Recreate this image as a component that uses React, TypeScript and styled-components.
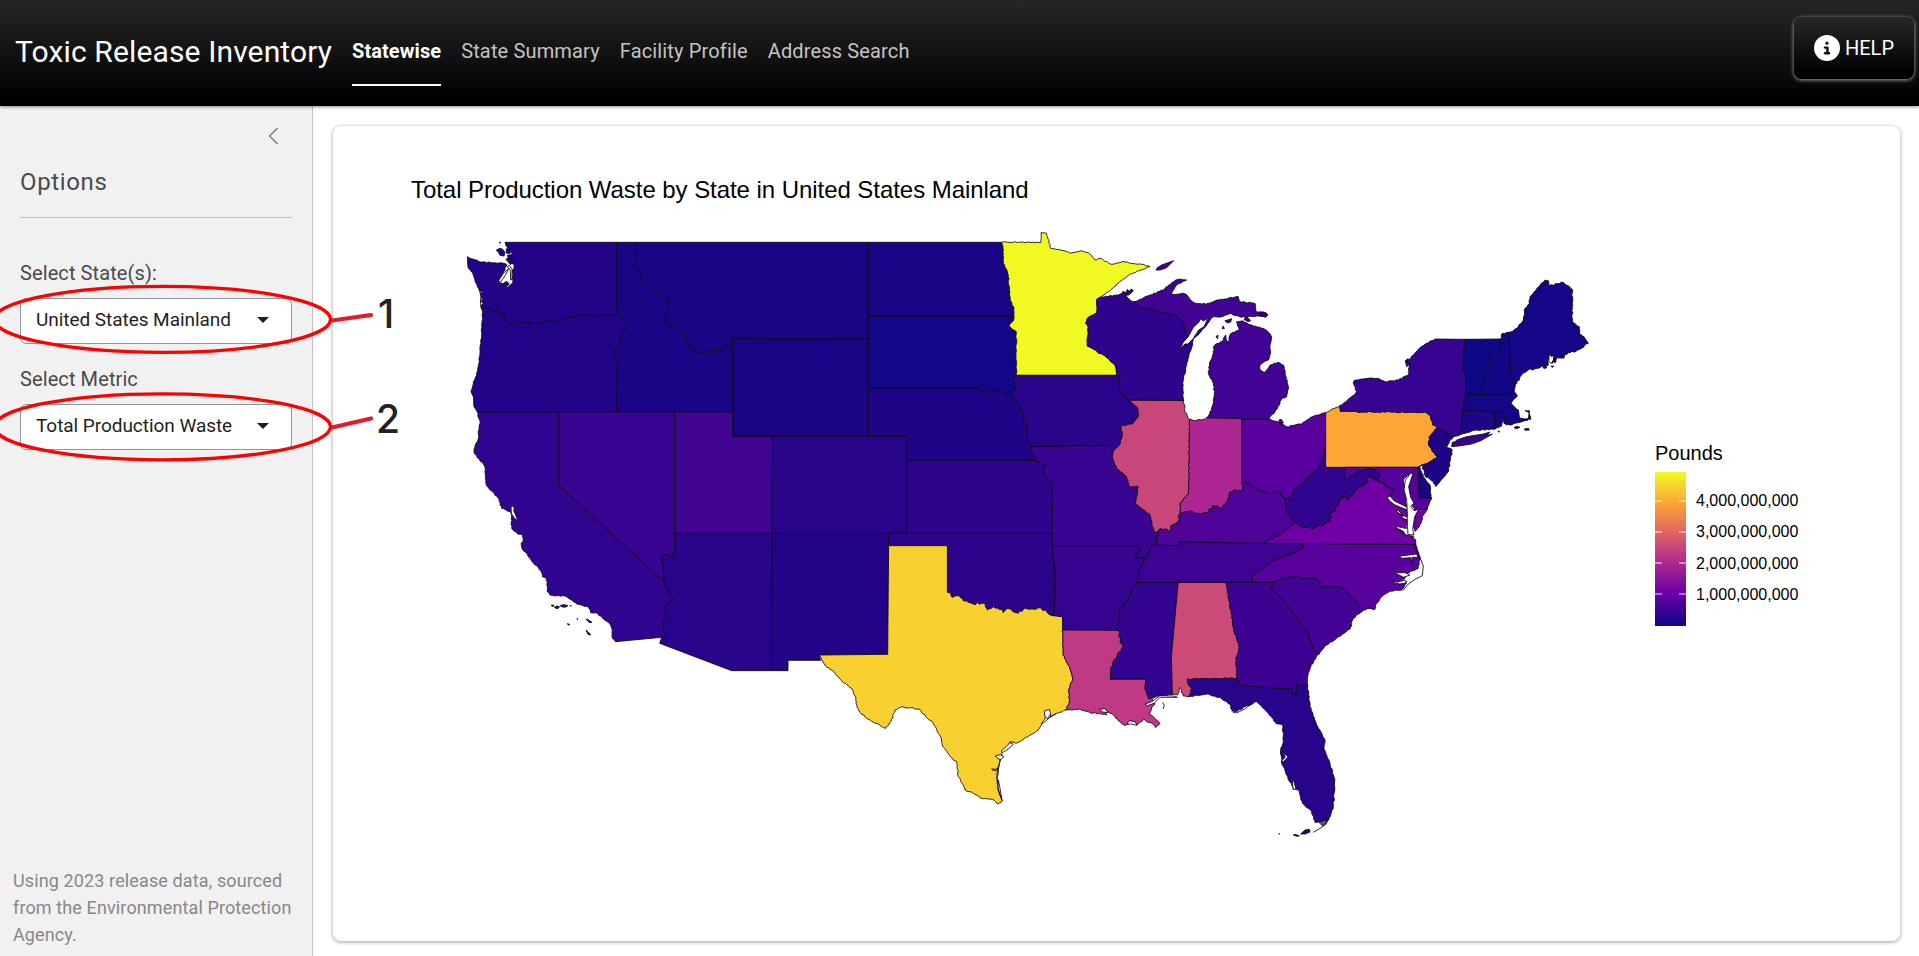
import React from 'react';
import styled, { createGlobalStyle } from 'styled-components';
import { FaCircleInfo } from 'react-icons/fa6';

const GlobalStyle = createGlobalStyle`
  *, *::before, *::after { box-sizing: border-box; }
  html, body, #root { height: 100%; }
  body {
    margin: 0;
    background: #fff;
    color: #222;
    font-family: Roboto, 'Liberation Sans', sans-serif;
    overflow: hidden;
  }
`;

const Page = styled.div`
  position: relative;
  display: flex;
  flex-direction: column;
  height: 956px;
`;

const Navbar = styled.header`
  display: flex;
  align-items: flex-start;
  flex: 0 0 106px;
  padding: 0 5px 0 15px;
  background: linear-gradient(#262626, #121212 50%, #000 95%);
  box-shadow: 0 1px 3px rgba(0, 0, 0, 0.45);
  z-index: 1;
`;

const Brand = styled.h1`
  margin: 31px 21px 0 0;
  width: 316px;
  font-size: 30px;
  font-weight: 400;
  line-height: 42px;
  letter-spacing: 0.13px;
  white-space: nowrap;
  color: #fff;
`;

const Nav = styled.nav`
  display: flex;
  gap: 20px;
  margin-top: 16px;
`;

const NavLink = styled.a<{ $active?: boolean }>`
  height: 70px;
  padding-top: 20px;
  font-size: 20px;
  line-height: 30px;
  letter-spacing: ${(p) => (p.$active ? '0.08px' : '0.15px')};
  white-space: nowrap;
  font-weight: ${(p) => (p.$active ? 700 : 400)};
  color: ${(p) => (p.$active ? '#fff' : '#c3c3c3')};
  border-bottom: 2px solid ${(p) => (p.$active ? '#fff' : 'transparent')};
`;

const HelpButton = styled.button`
  display: flex;
  align-items: center;
  justify-content: center;
  gap: 5px;
  width: 120px;
  height: 62px;
  margin: 17px 0 0 auto;
  padding: 0 0 1px;
  border: 0;
  border-radius: 8px;
  background: linear-gradient(#262626, #121212 50%, #000 95%);
  box-shadow: 0 1px 4px rgba(255, 255, 255, 0.65);
  color: #fff;
  font: 400 20px Roboto, sans-serif;
`;

const Main = styled.div`
  display: flex;
  flex: 1;
  min-height: 0;
`;

const Sidebar = styled.aside`
  display: flex;
  flex-direction: column;
  flex: 0 0 313px;
  padding: 21px 20px 0;
  background: #f1f1f1;
  border-right: 1px solid #c1c1c1;
`;

const Collapse = styled.div`
  display: flex;
  justify-content: flex-end;
  height: 18px;
  padding-right: 13px;
`;

const SidebarTitle = styled.h2`
  margin: 19px 0 0;
  height: 54px;
  padding-top: 1px;
  border-bottom: 1px solid #c1c1c1;
  font-size: 24px;
  font-weight: 400;
  line-height: 34px;
  letter-spacing: 0.65px;
  color: #4a4a4a;
`;

const Field = styled.label<{ $top: number }>`
  display: block;
  margin-top: ${(p) => p.$top}px;
  font-size: 20px;
  line-height: 30px;
  letter-spacing: 0.1px;
  color: #4a4a4a;
`;

const Select = styled.div`
  display: flex;
  align-items: center;
  justify-content: space-between;
  height: 46px;
  margin-top: 10px;
  padding: 0 22px 2px 15px;
  border: 1px solid #8d959e;
  border-radius: 6px;
  background: #fff;
  font-size: 19px;
  letter-spacing: -0.05px;
  color: #1d1f21;
`;

const Caret = styled.span`
  border: 6px solid transparent;
  border-top-color: #1d1f21;
  border-bottom: 0;
`;

const Source = styled.p`
  margin: auto -15px 8px -7px;
  font-size: 18px;
  line-height: 27px;
  letter-spacing: 0.12px;
  color: #888;
`;

const Card = styled.section`
  flex: 1;
  margin: 20px 19px 15px 20px;
  padding-top: 48px;
  border-radius: 8px;
  background: #fff;
  box-shadow: 0 1px 4px rgba(0, 0, 0, 0.4);
  font-family: 'Liberation Sans', Arial, sans-serif;
  color: #000;
`;

const ChartTitle = styled.h3`
  margin: 0 0 0 78px;
  height: 46px;
  font-size: 24px;
  font-weight: 400;
  line-height: 32px;
  letter-spacing: -0.055px;
  white-space: nowrap;
`;

const ChartBody = styled.div`
  display: flex;
  gap: 55px;
  padding-left: 117px;
`;

const Legend = styled.div`
  padding-top: 221px;
`;

const LegendTitle = styled.div`
  height: 31px;
  font-size: 20px;
  line-height: 24px;
`;

const Scale = styled.div`
  display: flex;
  gap: 10px;
`;

const Ramp = styled.div`
  display: flex;
  flex-direction: column;
  gap: 29.3px;
  width: 31px;
  height: 154px;
  padding-top: 27.5px;
  background: linear-gradient(#f0f921, #f8d030 10%, #fca636 20%, #e16462 39%, #b12a90 58%, #6a00a8 79%, #0d0887);
`;

const Tick = styled.span`
  height: 2px;
  border: solid rgba(255, 255, 255, 0.45);
  border-width: 0 7px;
`;

const Values = styled.div`
  display: flex;
  flex-direction: column;
  padding-top: 13px;
  font-size: 16px;
  line-height: 31.3px;
`;

const Annotations = styled.svg`
  position: absolute;
  left: 0;
  top: 270px;
  z-index: 2;
`;

const Callout = styled.span<{ $x: number; $y: number }>`
  position: absolute;
  left: ${(p) => p.$x}px;
  top: ${(p) => p.$y}px;
  z-index: 2;
  font: 500 39px/40px Inter, 'Open Sans', sans-serif;
  color: #222;
`;

type Pt = [number, number];

/* Map sheets: each border is digitised on a sheet and shifted by the sheet's origin. */
const SHEET: Record<string, Pt> = {
  A: [0, 0],
  B: [900, 0],
  C: [1800, 0],
  D: [2520, 120],
  E: [990, 1020],
  F: [1830, 1020],
};

const read = (src: string): Pt[] => {
  let origin: Pt = [0, 0];
  const out: Pt[] = [];
  src.split(/\s+/).forEach((tok) => {
    if (SHEET[tok]) {
      origin = SHEET[tok];
      return;
    }
    const [x, y] = tok.split(',').map(Number);
    out.push([x + origin[0], y + origin[1]]);
  });
  return out;
};

/* Adds small deterministic wiggles so rivers and shores look natural. */
const roughen = (pts: Pt[], amp: number): Pt[] => {
  const out: Pt[] = [pts[0]];
  for (let i = 1; i < pts.length; i++) {
    const [x0, y0] = pts[i - 1];
    const [x1, y1] = pts[i];
    const len = Math.hypot(x1 - x0, y1 - y0);
    const n = Math.max(1, Math.round(len / 6));
    for (let k = 1; k < n; k++) {
      const s = Math.sin((x0 + k * 7.13) * 12.9898 + (y0 + k * 3.7) * 78.233) * 43758.5453;
      const d = (s - Math.floor(s) - 0.5) * 2 * amp;
      out.push([
        +(x0 + ((x1 - x0) * k) / n - ((y1 - y0) / len) * d).toFixed(1),
        +(y0 + ((y1 - y0) * k) / n + ((x1 - x0) / len) * d).toFixed(1),
      ]);
    }
    out.push([x1, y1]);
  }
  return out;
};

const STRAIGHT: Record<string, string> = {
  wa_n: 'A 165,67 500,67',
  wa_id: 'A 500,67 500,258 507,286',
  id_n: 'A 500,67 557,67',
  mt_n: 'A 557,67 1255,67',
  or_ca: 'A 82,576 326,576',
  or_nv: 'A 326,576 500,576',
  id_nv: 'A 500,576 674,576',
  id_ut: 'A 674,576 848,576',
  id_wy: 'A 848,395 848,576',
  mt_wy: 'A 848,395 848,356 1255,357',
  ut_wy: 'A 848,576 848,649 965,649',
  ca_mx: 'A 497,1265 635,1252',
  ca_nv: 'A 326,576 326,795 640,1083',
  nv_ut: 'A 674,576 674,940',
  ut_az: 'A 674,940 966,940',
  az_mx: 'A 635,1252 629,1270 845,1352 965,1352',
  az_nm: 'A 966,940 965,1352',
  ut_co: 'A 965,649 966,940',
  wy_co: 'A 965,649 1255,649',
  co_nm: 'A 966,940 1316,940',
  co_ok: 'A 1316,940 1372,940',
  co_ks: 'A 1372,940 1372,721',
  co_ne: 'A 1372,721 1372,649 1255,649',
  wy_ne: 'A 1255,649 1255,504',
  wy_sd: 'A 1255,504 1255,357',
  mt_sd: 'A 1255,357 1255,289',
  mt_nd: 'A 1255,289 1255,67',
  nd_n: 'A 1255,67 1654,67',
  nd_sd: 'A 1255,289 1692,289',
  ks_ne: 'B 472,721 860,721',
  ks_ok: 'B 472,940 906,940',
  ok_mo: 'B 906,940 906,977',
  ok_ar: 'B 906,977 915,1045 913,1187',
  nm_ok: 'B 416,940 416,977',
  nm_tx: 'B 416,977 413,1303 207,1305',
  nm_mx: 'B 65,1352 114,1352 114,1321 212,1321 207,1305',
  tx_ar: 'B 913,1187 938,1190 938,1230',
  mn_ia: 'C -102,466 201,466',
  ia_mo: 'C -58,680 175,677 190,692',
  mo_ar: 'C 6,977 262,977 270,990 253,1013 290,1015',
  ar_la: 'F 8,210 175,211',
  tn_ms: 'F 232,67 355,67',
  tn_al: 'F 355,67 498,67',
  tn_ga: 'F 498,67 575,67',
  ga_nc: 'F 575,67 642,67',
  ms_al: 'F 355,67 352,95 334,290 337,403',
  ga_fl: 'F 530,355 542,377 697,388 698,403 708,403 710,372 722,376 743,380',
  tn_va: 'C 640,970 758,970',
  tn_ky: 'C 318,975 387,977 387,965 640,970',
  in_oh: 'C 575,597 575,787',
  il_wi: 'C 235,540 401,541',
  mi_in: 'C 470,593 575,595 575,597',
  mi_oh: 'C 575,597 657,597',
  oh_pa: 'D 107,458 107,557',
  pa_wv: 'D 107,557 107,622 166,622',
  pa_md: 'D 166,622 383,622',
  md_de: 'D 383,622 387,713 425,715',
  ny_nj: 'D 442,503 490,530',
  ny_n: 'D 435,237 524,238',
  vt_n: 'D 524,238 632,237',
  vt_ma: 'D 528,403 573,404',
  ny_ma: 'D 528,403 518,452',
  ny_ct: 'D 518,452 513,515 498,528',
  ma_ct: 'D 518,452 613,455',
  ct_ri: 'D 613,455 615,507',
  nh_me: 'D 657,217 662,340 675,380',
  de_pa: 'D 410,612 397,614 383,622',
};

const ROUGH: Record<string, string> = {
  wa_coast:
    'A 95,267 92,240 90,215 85,205 75,180 68,158 55,145 52,110 92,126 160,130 170,133 165,150 148,175 147,188 165,195 172,203 188,188 188,150 193,138 180,120 186,100 172,82 165,67',
  wa_or: 'A 95,267 118,265 128,270 145,273 160,283 167,305 195,318 220,307 262,312 290,303 310,305 345,293 388,286 507,286',
  id_or: 'A 507,286 520,298 533,312 515,350 510,370 490,400 492,410 507,417 501,445 500,576',
  or_coast: 'A 95,267 97,290 95,345 90,380 88,425 80,465 70,485 63,515 70,530 72,560 82,576',
  id_mt:
    'A 557,67 557,142 575,160 575,180 600,195 630,228 645,238 656,238 652,265 645,300 645,312 657,325 680,307 690,320 697,335 710,355 710,370 728,375 735,395 745,402 750,395 775,397 775,392 820,390 828,377 848,395',
  ca_coast:
    'A 82,576 90,610 85,640 85,655 72,688 75,703 100,732 106,750 106,775 112,800 147,838 155,865 183,878 185,925 203,942 218,945 220,960 213,970 218,990 233,1005 250,1028 275,1055 277,1070 290,1075 292,1115 300,1125 350,1130 370,1145 380,1152 415,1160 422,1178 440,1178 480,1213 487,1230 487,1255 497,1265',
  ca_az: 'A 640,1083 652,1105 660,1130 669,1138 650,1155 645,1195 637,1210 640,1230 650,1240 635,1252',
  az_nv: 'A 640,1083 643,1075 635,1008 655,1003 667,1012 675,995 674,940',
  nd_mn: 'B 754,67 760,90 760,130 775,165 780,240 792,265 792,289',
  sd_mn: 'B 792,289 790,303 777,315 785,325 799,335 799,466',
  sd_ia: 'B 799,466 792,470 793,485 799,495 795,510 788,527',
  ne_ia: 'B 788,527 800,543 818,578 822,605 830,615 832,655 842,680',
  ne_mo: 'B 842,680 845,695 860,721',
  ks_mo: 'B 860,721 878,735 890,735 877,752 890,772 898,782 906,785 906,940',
  tx_la: 'E 848,210 849,285 862,310 872,330 878,355 868,385 868,430 858,450',
  tx_coast:
    'E 858,450 825,462 812,472 808,452 795,455 795,478 785,492 775,510 740,532 708,550 690,545 688,562 668,572 665,590 650,590 660,602 655,625 652,650 657,690 667,722 655,732 638,718 605,715 580,700 555,690 535,650 530,605 520,600 487,555 485,540 460,490 430,462 417,447 375,443 367,440 345,450 333,485 317,505 265,478 238,455 228,430 228,415 215,385 190,368 155,330 140,322 128,303 117,285',
  mn_n: 'B 754,67 873,67 873,38 890,40 902,85 C 45,93 60,100 90,93 115,98 135,120 150,115 185,133 222,125 245,130 275,133 300,140',
  mn_lake: 'C 300,140 240,162 205,190 180,212 150,232',
  mn_wi: 'C 150,232 140,238 140,280 115,292 107,310 115,322 112,378 160,405 195,435 201,466',
  ia_wi: 'C 201,466 210,485 207,510 235,540',
  ia_il: 'C 235,540 262,562 265,590 245,612 212,618 217,650 208,675 190,692',
  mo_il: 'C 190,692 187,712 200,745 230,770 238,800 265,800 255,850 300,885 308,920 313,937',
  mo_ky: 'C 313,937 325,937 318,975',
  mo_tn: 'C 318,975 305,975 290,1015',
  la_coast:
    'F 267,417 278,418 285,430 275,445 268,462 290,480 300,490 287,503 275,490 250,478 232,495 215,487 195,497 175,482 160,465 135,450 140,465 118,460 95,460 60,447 18,450',
  ms_coast: 'F 267,417 300,408 337,403',
  tn_nc: 'C 605,1087 610,1065 640,1045 665,1025 700,1010 740,995 758,985 758,970',
  al_ga: 'F 498,67 523,215 538,262 528,295 530,355',
  al_fl: 'F 530,355 383,357 385,372 395,385 388,410',
  al_coast: 'F 337,403 353,405 360,382 370,408 388,410',
  ga_sc: 'F 642,67 632,85 660,110 690,145 722,190 740,212 762,270 773,285',
  nc_sc: 'F 642,67 665,55 690,50 765,55 780,65 782,80 845,80 910,150',
  sc_coast: 'F 910,150 880,175 870,207 830,235 800,255 773,285',
  ga_coast: 'F 773,285 752,320 743,350 743,380',
  fl_coast:
    'F 743,380 750,440 770,495 795,540 793,570 810,610 825,660 820,740 805,780 765,787 755,755 727,730 715,690 700,688 665,610 662,565 670,545 668,495 650,492 625,460 590,425 555,440 530,455 515,450 512,435 480,412 440,402 388,410',
  nc_coast:
    'D 377,853 390,890 385,925 350,940 345,955 325,968 350,965 335,990 300,993 275,1010 260,1030 255,1048 240,1045 220,1050',
  ky_va: 'C 640,970 690,945 737,907',
  ky_wv: 'C 737,907 710,875 705,838',
  il_in: 'C 418,597 416,770 415,820 390,850 390,877',
  il_lake: 'C 401,541 405,575 418,597',
  in_lake: 'C 418,597 432,602 455,600 470,593',
  wi_n: 'C 150,232 205,225 225,217 230,230 240,240 255,245',
  wi_mi: 'C 255,245 270,262 340,277 385,290 400,310 405,330 412,350',
  wi_lake: 'C 412,350 430,355 428,375 418,400 408,440 398,490 401,541',
  mi_up:
    'C 255,245 300,225 340,210 365,188 385,178 410,180 380,195 363,225 400,220 415,230 430,247 468,253 500,240 565,230 570,245 615,250 618,275 650,280 648,290 620,288 575,292 540,280 515,290 490,290 470,315 450,338 430,355 412,350',
  mi_low:
    'C 470,593 485,570 493,520 490,490 475,460 480,425 490,400 492,378 520,360 527,345 533,372 541,342 568,328 560,305 580,303 610,318 640,325 660,342 665,355 660,375 662,400 655,420 630,435 630,450 645,457 660,435 685,427 700,435 708,470 715,500 710,530 695,535 690,550 675,575 657,597',
  oh_lake: 'C 657,597 685,605 710,620 755,612 780,593 827,578',
  oh_wv: 'D 107,557 98,590 85,625 55,650 30,675 18,682 0,715 -15,718',
  pa_lake: 'D 107,458 150,437',
  ny_pa: 'D 150,437 152,455 408,457 422,470 428,495 442,503',
  pa_nj: 'D 442,503 420,528 415,550 425,570 442,590 425,602 410,612',
  md_ves: 'D 375,757 385,750 412,747',
  md_sea: 'D 412,747 425,715',
  va_shore: 'D 412,747 400,765 388,800 375,814 370,800 375,775 375,757',
  de_coast: 'D 410,612 388,620 400,650 420,675 425,715',
  nj_coast: 'D 410,612 397,620 405,648 430,665 437,680 475,635 487,570 470,560 490,530',
  ny_lakes:
    'D 150,437 195,403 200,395 190,370 192,362 215,357 265,355 285,365 325,360 355,345 358,318 348,305 375,280 385,268 410,250 435,237',
  ny_vt: 'D 524,238 522,270 520,330 527,345 528,403',
  ny_harbor: 'D 498,528 490,530',
  vt_nh: 'D 632,237 628,278 600,290 595,320 582,340 580,370 573,404',
  nh_ma: 'D 573,404 640,405 672,393',
  nh_n: 'D 632,237 637,220 657,217',
  nh_coast: 'D 675,380 672,393',
  me_n: 'D 657,217 665,215 680,205 700,180 705,145 718,130 720,110 765,60 775,62 778,77 820,67 847,88 847,187 868,200 868,222 882,230 895,250',
  ma_coast: 'D 672,393 682,408 662,430 685,450 690,475 715,476 718,460 705,452 718,452 722,478 690,487 660,495',
  ma_ri: 'D 613,455 640,457 645,480 660,495',
  ri_coast: 'D 660,495 645,492 640,475 635,498 615,507',
  ct_coast: 'D 615,507 560,510 530,518 498,528',
};

/* Meandering rivers and ragged shores get a stronger wiggle. */
const RAGGED: Record<string, string> = {
  ar_tn: 'C 290,1015 270,1045 262,1087',
  ar_ms: 'C 262,1087 243,1110 230,1145 210,1165 205,1195 205,1231',
  la_ms: 'F 175,211 188,262 170,290 155,320 150,357',
  ky_oh: 'C 705,838 690,815 658,823 610,803 595,785 575,787',
  ky_in: 'C 575,787 577,808 540,815 537,835 512,865 488,857 470,878 440,880 425,873 390,877',
  ky_il: 'C 390,877 385,903 365,915 362,935 330,925 313,937',
  md_wv: 'D 166,622 167,660 195,640 215,632 235,625 250,628 268,640 265,663',
  wv_va: 'D 265,663 235,645 230,665 200,690 185,705 175,718 158,708 140,740 120,765 120,785 75,803 40,803 17,787',
  md_va: 'D 265,663 285,675 308,690 312,688 295,715 320,730 352,748',
  md_bay: 'D 352,748 348,700 340,660 368,637 352,675 358,710 368,740 375,757',
  va_coast: 'D 352,748 350,770 318,752 352,785 350,805 318,803 350,825 370,828 377,853',
  me_coast: 'D 895,250 870,268 835,278 822,295 800,292 787,310 780,285 775,315 755,318 715,330 690,350 675,380',
};

const ARCS: Record<string, Pt[]> = {};
Object.entries(STRAIGHT).forEach(([k, v]) => (ARCS[k] = read(v)));
Object.entries(ROUGH).forEach(([k, v]) => (ARCS[k] = roughen(read(v), 1.8)));
Object.entries(RAGGED).forEach(([k, v]) => (ARCS[k] = roughen(read(v), 4)));
ARCS.la_ms.push(...read('F 257,357 255,385 267,417'));
ARCS.nc_va = [[2558, 970], [2700, 972], [2897, 973]];
ARCS.sd_ne = [[1255, 504], ...roughen(read('B 680,504 708,520 718,514 750,514 770,520 788,527'), 1.5)];
ARCS.tx_ok = [
  [1316, 977],
  [1492, 977],
  ...roughen(
    read('B 592,1117 608,1132 630,1130 640,1143 665,1150 700,1150 712,1170 730,1160 755,1168 760,1178 770,1165 805,1180 820,1168 870,1163 890,1175 913,1187'),
    4,
  ),
];

/* Joins arcs end to end, flipping any arc that is stored the other way round. */
const ring = (names: string): string => {
  const list = names.split(' ').map((n) => ARCS[n]);
  const dist = (a: Pt, b: Pt) => Math.hypot(a[0] - b[0], a[1] - b[1]);
  const first = list[0];
  const next = list[1];
  const tail = first[first.length - 1];
  const head = first[0];
  const near = (p: Pt) => Math.min(dist(p, next[0]), dist(p, next[next.length - 1]));
  let path = near(tail) <= near(head) ? [...first] : [...first].reverse();
  list.slice(1).forEach((arc) => {
    const end = path[path.length - 1];
    path = path.concat(dist(end, arc[0]) <= dist(end, arc[arc.length - 1]) ? arc : [...arc].reverse());
  });
  return path.map((p) => p.join(',')).join(' ');
};

const STATES: [string, string, string][] = [
  ['Washington', '#230488', 'wa_coast wa_n wa_id wa_or'],
  ['Oregon', '#210488', 'wa_or id_or or_nv or_ca or_coast'],
  ['Idaho', '#1b0587', 'id_n id_mt id_wy id_ut id_nv id_or wa_id'],
  ['Montana', '#1b0587', 'mt_n mt_nd mt_sd mt_wy id_mt'],
  ['Wyoming', '#1b0587', 'mt_wy wy_sd wy_ne wy_co ut_wy id_wy'],
  ['California', '#30048e', 'or_ca ca_nv ca_az ca_mx ca_coast'],
  ['Nevada', '#390491', 'or_nv id_nv nv_ut az_nv ca_nv'],
  ['Utah', '#400392', 'id_ut ut_wy ut_co ut_az nv_ut'],
  ['Arizona', '#28048a', 'ut_az az_nm az_mx ca_az az_nv'],
  ['New Mexico', '#230488', 'co_nm nm_ok nm_tx nm_mx az_nm'],
  ['Colorado', '#28048a', 'wy_co co_ne co_ks co_ok co_nm ut_co'],
  ['North Dakota', '#1b0587', 'nd_n nd_mn nd_sd mt_nd'],
  ['South Dakota', '#110787', 'nd_sd sd_mn sd_ia sd_ne wy_sd mt_sd'],
  ['Nebraska', '#200488', 'sd_ne ne_ia ne_mo ks_ne co_ne wy_ne'],
  ['Kansas', '#2e048d', 'ks_ne ks_mo ks_ok co_ks'],
  ['Oklahoma', '#2b048b', 'co_ok ks_ok ok_mo ok_ar tx_ok nm_ok'],
  ['Texas', '#f8d030', 'tx_ok tx_ar tx_la tx_coast nm_tx'],
  ['Minnesota', '#f0f921', 'mn_n mn_lake mn_wi mn_ia sd_mn nd_mn'],
  ['Iowa', '#2a048b', 'mn_ia ia_wi ia_il ia_mo ne_ia sd_ia'],
  ['Missouri', '#390491', 'ia_mo mo_il mo_ky mo_tn mo_ar ok_mo ks_mo ne_mo'],
  ['Arkansas', '#350490', 'mo_ar ar_tn ar_ms ar_la tx_ar ok_ar'],
  ['Louisiana', '#bf3984', 'ar_la la_ms la_coast tx_la'],
  ['Mississippi', '#330490', 'tn_ms ms_al ms_coast la_ms ar_ms'],
  ['Alabama', '#cc4a78', 'tn_al al_ga al_fl al_coast ms_al'],
  ['Georgia', '#3c0392', 'tn_ga ga_nc ga_sc ga_coast ga_fl al_ga'],
  ['Florida', '#28048a', 'ga_fl fl_coast al_fl'],
  ['South Carolina', '#420394', 'nc_sc sc_coast ga_sc'],
  ['North Carolina', '#59019d', 'nc_va nc_coast nc_sc ga_nc tn_nc'],
  ['Tennessee', '#3e0393', 'tn_ky tn_va tn_nc tn_ga tn_al tn_ms ar_tn mo_tn'],
  ['Kentucky', '#4d0298', 'ky_il ky_in ky_oh ky_wv ky_va tn_ky mo_ky'],
  ['Virginia', '#6f00a5', 'wv_va md_va va_coast nc_va tn_va ky_va'],
  ['West Virginia', '#30048e', 'pa_wv md_wv wv_va ky_wv oh_wv'],
  ['Ohio', '#59019f', 'mi_oh oh_lake oh_pa oh_wv ky_oh in_oh'],
  ['Indiana', '#ad2691', 'in_lake mi_in in_oh ky_in il_in'],
  ['Illinois', '#c9467a', 'il_wi il_lake il_in ky_il mo_il ia_il'],
  ['Wisconsin', '#2e048d', 'wi_n wi_mi wi_lake il_wi ia_wi mn_wi'],
  ['Upper Michigan', '#410394', 'mi_up wi_mi'],
  ['Michigan', '#410394', 'mi_low mi_oh mi_in'],
  ['Pennsylvania', '#fca636', 'pa_lake ny_pa pa_nj de_pa pa_md pa_wv oh_pa'],
  ['New York', '#360490', 'ny_lakes ny_n ny_vt ny_ma ny_ct ny_harbor ny_nj ny_pa'],
  ['Vermont', '#0d0887', 'vt_n vt_nh vt_ma ny_vt'],
  ['New Hampshire', '#100787', 'nh_n nh_me nh_coast nh_ma vt_nh'],
  ['Maine', '#150687', 'me_n me_coast nh_me'],
  ['Massachusetts', '#130787', 'nh_ma ma_coast ma_ri ma_ct ny_ma vt_ma'],
  ['Connecticut', '#1c0587', 'ma_ct ct_ri ct_coast ny_ct'],
  ['Rhode Island', '#130787', 'ma_ri ri_coast ct_ri'],
  ['New Jersey', '#200488', 'ny_nj nj_coast pa_nj'],
  ['Delaware', '#190587', 'de_pa md_de de_coast'],
  ['Maryland', '#55019c', 'pa_md md_de md_sea md_ves md_bay md_va md_wv'],
  ['Virginia shore', '#6f00a5', 'va_shore md_ves'],
];

/* Bays and inlets cut out of the coast. */
const INLETS = [
  'C 390,388 400,366 415,350 430,322 447,306 452,296 460,303 474,294 462,320 446,330 430,355 414,372 405,372',
  'A 183,862 188,858 193,864 191,872 205,904 192,893 184,880',
  'A 178,136 186,148 186,178 182,180 181,150 172,140',
  'A 146,182 160,160 176,146 166,166 152,186',
  'A 88,212 102,215 94,219',
  'A 92,235 100,234 94,243 100,252 94,256 92,250',
  'D 325,880 332,888 380,882 384,892 366,892 368,910 362,893 334,895',
  'D 307,928 322,938 345,938 360,945 340,952 322,942',
  'D 307,960 320,967 345,960 350,968 330,972 316,970',
  'D 292,712 300,708 312,722 352,742 352,750 315,735 298,722',
  'D 362,640 369,640 356,680 362,712 372,730 362,738 372,752 386,748 374,770 368,808 372,824 354,824 352,790 352,760 350,720 342,690 346,660',
  'D 778,282 785,290 792,285 790,300 784,310 776,304',
  'F 668,575 684,590 670,606 666,602 676,590',
  'F 700,655 703,670 708,686 700,688 697,670',
  'F 118,448 135,446 145,458 128,456',
  'F 255,432 275,425 300,407 340,408 352,412 300,412 282,430 262,437',
  'F 200,492 208,482 226,485 230,496 214,492',
  'E 793,453 808,448 812,460 803,476 795,470',
  'E 663,574 678,560 690,548 700,553 684,568 668,577',
  'E 645,588 660,584 672,590 660,600',
  'E 655,660 660,685 664,712 660,705 654,682',
];

const ISLANDS: [string, string][] = [
  ['#410394', 'C 318,150 322,143 335,135 371,122 350,143 330,150'],
  ['#410394', 'C 516,325 520,318 523,326'],
  ['#410394', 'C 525,302 533,300 545,296 542,306 532,309'],
  ['#410394', 'C 498,350 504,345 503,356'],
  ['#410394', 'C 582,298 590,290 602,302 594,305'],
  ['#410394', 'C 630,284 640,276 654,285 645,292'],
  ['#410394', 'C 687,600 694,598 700,608 691,615'],
  ['#2e048d', 'C 218,214 228,218 232,208 238,215 244,207 250,212 240,222 234,226 226,222'],
  ['#360490', 'D 487,547 495,545 500,540 530,530 580,522 600,516 590,526 607,522 575,541 545,552 505,558 485,560'],
  ['#360490', 'D 346,302 354,296 352,306 362,310 350,320'],
  ['#130787', 'D 672,503 680,499 690,502 680,506'],
  ['#130787', 'D 703,507 715,505 718,510 706,511'],
  ['#130787', 'D 624,514 628,513 627,517'],
  ['#150687', 'D 810,286 818,283 822,292 813,295'],
  ['#150687', 'D 792,298 797,296 798,306 792,308'],
  ['#150687', 'D 758,320 766,318 770,324 761,325'],
  ['#150687', 'D 783,318 792,319 786,322'],
  ['#30048e', 'A 303,1156 312,1155 309,1160'],
  ['#30048e', 'A 313,1162 320,1158 329,1160 322,1167'],
  ['#30048e', 'A 331,1156 343,1154 354,1157 345,1162 334,1160'],
  ['#30048e', 'A 360,1157 364,1157 362,1159'],
  ['#30048e', 'A 382,1195 383,1198 381,1198'],
  ['#30048e', 'A 352,1211 359,1213 356,1216'],
  ['#30048e', 'A 408,1197 416,1200 426,1207 418,1208'],
  ['#30048e', 'A 408,1230 415,1236 422,1245 414,1243'],
  ['#230488', 'A 139,90 150,85 158,88 165,97 162,108 150,106 146,98'],
  ['#230488', 'A 148,66 152,67 150,70'],
  ['#230488', 'A 168,88 178,83 185,90 180,100 170,100'],
  ['#230488', 'A 168,118 175,112 190,122 182,134'],
  ['#230488', 'A 172,106 182,104 184,114 176,114'],
  ['#230488', 'A 160,190 170,184 178,192 168,202'],
  ['#28048a', 'F 722,822 735,810 748,808 750,816 735,822'],
  ['#28048a', 'F 700,825 706,823 718,828 710,829'],
  ['#28048a', 'F 656,821 659,821 658,823'],
  ['#555a60', 'F 776,786 790,782 802,780 796,792 788,798'],
];

const LINES = [
  'D 373,853 388,888 400,918 397,947 375,958 355,972 338,992',
  'E 634,626 645,628 655,625 648,632 636,630',
  'F 308,427 313,436 309,447',
  'F 815,757 808,775 798,792 782,804 760,817',
  'F 515,455 530,459 556,446 575,430',
  'C 235,218 243,209 249,214',
  'D 318,752 330,762 350,772',
  'D 314,804 330,812 348,824',
  'E 783,493 795,485 812,470 828,462',
  'D 640,478 642,490 650,488',
  'E 662,598 653,625 650,650 654,690 666,722',
];

const toPoints = (s: string) => read(s).map((p) => p.join(',')).join(' ');

const UsMap = () => (
  <svg width="1150" height="630" viewBox="0 0 3450 1890" role="img" aria-label="Total Production Waste by State">
    <g stroke="#0c0714" strokeOpacity="0.85" strokeWidth="3" strokeLinejoin="round">
      {STATES.map(([name, fill, arcs]) => (
        <polygon key={name} fill={fill} points={ring(arcs)} />
      ))}
      {INLETS.map((pts) => (
        <polygon key={pts} fill="#fff" points={toPoints(pts)} />
      ))}
      {ISLANDS.map(([fill, pts]) => (
        <polygon key={pts} fill={fill} points={toPoints(pts)} />
      ))}
      {LINES.map((pts) => (
        <polyline key={pts} fill="none" points={toPoints(pts)} />
      ))}
    </g>
  </svg>
);

const NAV = ['Statewise', 'State Summary', 'Facility Profile', 'Address Search'];
const VALUES = ['4,000,000,000', '3,000,000,000', '2,000,000,000', '1,000,000,000'];

export default function App() {
  return (
    <Page>
      <GlobalStyle />
      <Navbar>
        <Brand>Toxic Release Inventory</Brand>
        <Nav>
          {NAV.map((label, i) => (
            <NavLink key={label} $active={i === 0}>
              {label}
            </NavLink>
          ))}
        </Nav>
        <HelpButton>
          <FaCircleInfo size={26} />
          HELP
        </HelpButton>
      </Navbar>
      <Main>
        <Sidebar>
          <Collapse>
            <svg width="11" height="18" viewBox="0 0 11 18" fill="none" stroke="#777" strokeWidth="1.4">
              <path d="M9.5 1 1.5 9l8 8" />
            </svg>
          </Collapse>
          <SidebarTitle>Options</SidebarTitle>
          <Field $top={40}>
            Select State(s):
            <Select>
              United States Mainland
              <Caret />
            </Select>
          </Field>
          <Field $top={20}>
            Select Metric
            <Select>
              Total Production Waste
              <Caret />
            </Select>
          </Field>
          <Source>Using 2023 release data, sourced from the Environmental Protection Agency.</Source>
        </Sidebar>
        <Card>
          <ChartTitle>Total Production Waste by State in United States Mainland</ChartTitle>
          <ChartBody>
            <UsMap />
            <Legend>
              <LegendTitle>Pounds</LegendTitle>
              <Scale>
                <Ramp>
                  {VALUES.map((v) => (
                    <Tick key={v} />
                  ))}
                </Ramp>
                <Values>
                  {VALUES.map((v) => (
                    <span key={v}>{v}</span>
                  ))}
                </Values>
              </Scale>
            </Legend>
          </ChartBody>
        </Card>
      </Main>
      <Annotations width="400" height="200" viewBox="0 270 400 200" fill="none">
        <path d="M332 320.5 371 315M332 427.5 371 418.5" stroke="#e8192c" strokeWidth="4.2" strokeLinecap="round" />
        <ellipse cx="162.5" cy="319.4" rx="168" ry="33" stroke="#f00" strokeWidth="3.3" />
        <ellipse cx="162.5" cy="426.8" rx="168" ry="33" stroke="#f00" strokeWidth="3.3" />
      </Annotations>
      <Callout $x={378} $y={294}>1</Callout>
      <Callout $x={376} $y={399}>2</Callout>
    </Page>
  );
}
